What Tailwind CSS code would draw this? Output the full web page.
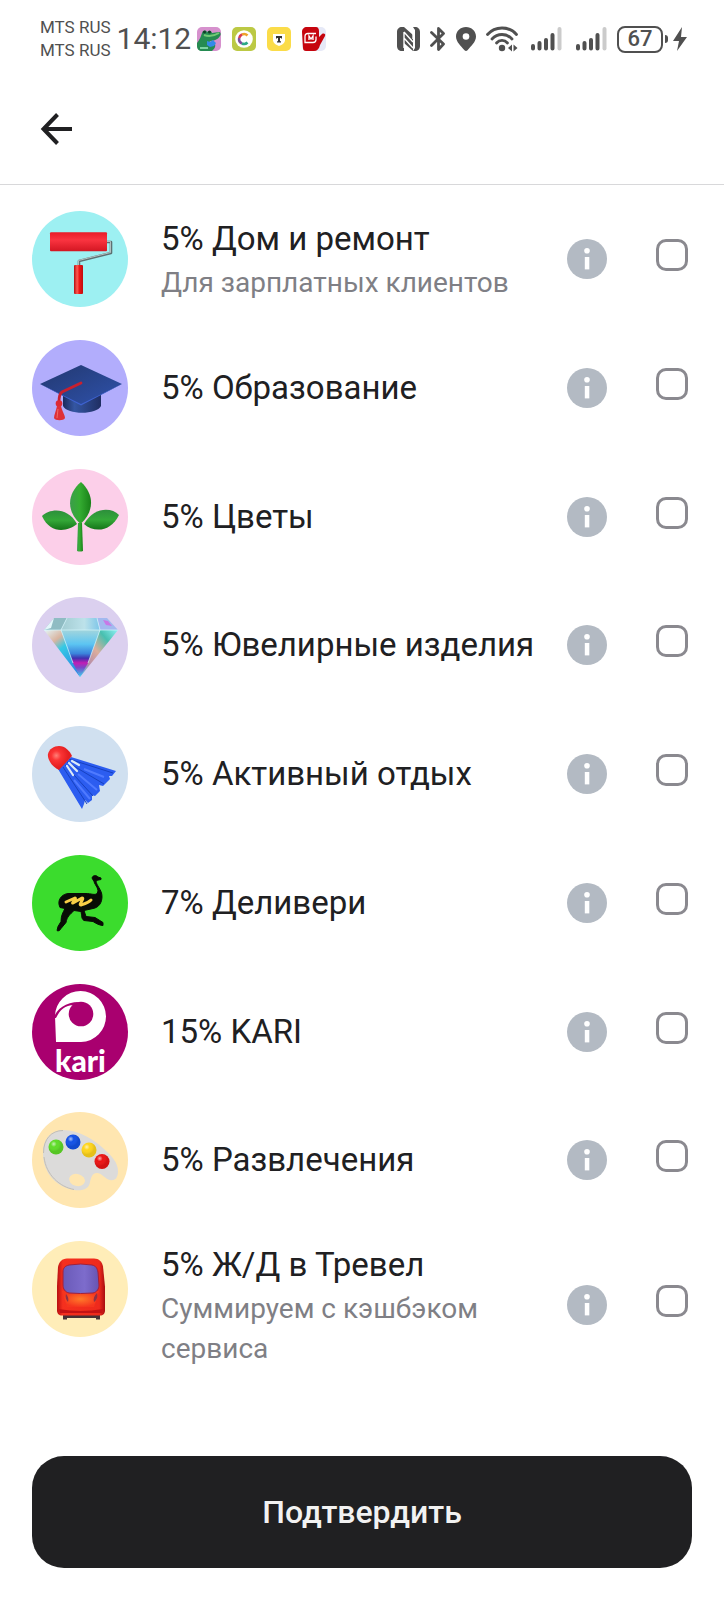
<!DOCTYPE html>
<html lang="ru">
<head>
  <meta charset="UTF-8" />
  <meta name="viewport" content="width=device-width, initial-scale=1" />
  <title>Категории кэшбэка</title>
  <script src="https://cdn.jsdelivr.net/npm/@tailwindcss/browser@4"></script>
</head>
<body class="bg-white font-['Roboto','Noto_Sans',sans-serif] text-[#202022]">

  <svg class="hidden" aria-hidden="true">
    <symbol id="info" viewBox="0 0 40 40">
      <circle cx="20" cy="20" r="20" fill="#b3bac3" />
      <circle cx="20" cy="11.7" r="2.8" fill="#fff" />
      <rect x="17.8" y="18" width="4.5" height="12.4" fill="#fff" />
    </symbol>
    <symbol id="signal" viewBox="0 0 32 26">
      <g stroke="#505050" stroke-width="4" stroke-linecap="round">
        <path d="M3 20V22.500M9.500 17V22.500M16 14V22.500M22.500 9V22.500" />
        <path d="M29.500 3V22.500" stroke="#cbcbcb" />
      </g>
    </symbol>
  </svg>

  <div class="min-h-screen flex flex-col">

    <!-- Статус-бар -->
    <div class="flex items-center justify-between h-[78px] pl-10 pr-9 text-[#505050]">
      <div class="flex items-center">
        <div class="text-[17px] leading-[23px] mr-1.5">
          <p>MTS RUS</p>
          <p>MTS RUS</p>
        </div>
        <span class="text-[30px] leading-8 mr-1.5">14:12</span>
        <div class="flex gap-[11px]">
          <svg class="size-6" viewBox="0 0 24 24">
            <rect width="24" height="24" rx="5" fill="#d691cd" />
            <path d="M0 16C3 12 4 9 5 6c1-3 4-3 5-1 2-2 5-1 5 1l7-1c2 0 2 3 1 4-2 4-7 5-11 5l6 3c1 3-1 5-3 7H5c-3 0-5-2-5-5z" fill="#258b51" />
            <path d="M7 8c5 2 10 1 15-2" stroke="#72ca75" stroke-width="2" fill="none" />
            <path d="M10 14l3 1 3-2 3 3-2 3-4 1-3-2z" fill="#3489e8" />
            <circle cx="7.500" cy="5" r="1.500" fill="#113c28" /><circle cx="12.500" cy="5" r="1.500" fill="#113c28" />
            <path d="M3 21h8" stroke="#7bd3a0" stroke-width="2" />
          </svg>
          <svg class="size-6" viewBox="0 0 24 24">
            <rect width="24" height="24" rx="5" fill="#bcc944" />
            <circle cx="12" cy="12" r="8.800" fill="#fff" />
            <g fill="none" stroke-width="2.600">
              <path d="M15.500 8.500A5 5 0 0 0 10 7.500" stroke="#eea22b" />
              <path d="M10 7.500A5 5 0 0 0 7.200 11" stroke="#d93a4e" />
              <path d="M7.200 11A5 5 0 0 0 10 16.500" stroke="#7b4c9d" />
              <path d="M10 16.500A5 5 0 0 0 15.500 15.500" stroke="#2ca986" />
            </g>
          </svg>
          <svg class="size-6" viewBox="0 0 24 24">
            <rect width="24" height="24" rx="5" fill="#fbdc49" />
            <path d="M6 7h12v6c0 3-3 5-6 6-3-1-6-3-6-6z" fill="#fff" />
            <path d="M9 9h6v2.500h-1V11h-1v3.300h1V15.500h-4v-1.200h1V11h-1v.5H9z" fill="#333" />
          </svg>
          <svg class="size-6" viewBox="0 0 24 24">
            <rect width="24" height="24" rx="5" fill="#e6e9f7" />
            <path d="M5 0h9c2 0 3 2 3 4v6l3-3c2-1 4 0 3 2l-5 9c-1 4-3 6-6 6H4c-2 0-3-1-3-3L0 5c0-3 2-5 5-5z" fill="#c6050e" />
            <path d="M14 6.500H6c-2 0-3 1-3 3v6h8c2 0 3-1 3-3v-3M7 13V9l2 3 2-3v4" stroke="#fff" stroke-width="1.300" fill="none" />
          </svg>
        </div>
      </div>

      <div class="flex items-center">
        <svg class="w-[23px] h-6 mr-2.5" viewBox="0 0 23 24">
          <path d="M5 0h2v24H5c-3 0-5-2-5-5V5c0-3 2-5 5-5zM16 0h2c3 0 5 2 5 5v14c0 3-2 5-5 5h-2l2-3V3z" fill="#505050" />
          <path d="M7 0l9 8v16l-9-8z" fill="#505050" />
          <path d="M7 5v16M7 5l9 10M7 11l9 10M16 2v10" stroke="#fff" stroke-width="1.400" fill="none" />
        </svg>
        <svg class="w-4 h-[26px] mr-2.5" viewBox="0 0 16 26">
          <path d="M1.500 6.500L13.500 18 8.500 23.500V2.500L13.500 7.500 1.500 19.500" fill="none" stroke="#505050" stroke-width="2.800" stroke-linejoin="round" stroke-linecap="round" />
        </svg>
        <svg class="w-5 h-[26px] mr-2.5" viewBox="0 0 20 26">
          <path d="M10 1C4.500 1 0 5 0 10.500 0 16 5 20 8.500 24.300c1 1 2 1 3 0C15 20 20 16 20 10.500 20 5 15.500 1 10 1z" fill="#505050" />
          <circle cx="10" cy="10.500" r="3.300" fill="#fff" />
        </svg>
        <svg class="w-8 h-[26px] mr-3" viewBox="0 0 32 26">
          <g fill="none" stroke="#505050" stroke-width="2.800" stroke-linecap="round">
            <path d="M1.500 8.500C9-.2 23-.2 30.500 8.500" />
            <path d="M6 13c5.500-6 14.500-6 20 0" />
            <path d="M10.500 17c3-3.400 8-3.400 11 0" />
          </g>
          <circle cx="16" cy="22" r="3.200" fill="#505050" />
          <path d="M26 18.500v7l-4-3.500zM27.500 18.500v7l4-3.500z" fill="#505050" />
        </svg>
        <svg class="w-8 h-[26px] mr-[13px]"><use href="#signal" /></svg>
        <svg class="w-8 h-[26px] mr-2.5"><use href="#signal" /></svg>
        <span class="flex items-center justify-center w-[46px] h-[27px] border-2 border-[#505050] rounded-lg text-[22px] leading-6 font-medium mr-0.5">67</span>
        <span class="w-[3px] h-2 rounded-r bg-[#505050] mr-1"></span>
        <svg class="w-4 h-[26px]" viewBox="0 0 16 26">
          <path d="M10 1L1 15h6L5 25 15 11H9z" fill="#505050" />
        </svg>
      </div>
    </div>

    <!-- Шапка -->
    <header class="flex items-center h-[107px] pb-1 px-10 border-b border-[#d8d8da]">
      <button type="button" aria-label="Назад">
        <svg class="size-8" viewBox="0 0 32 32" fill="none" stroke="#202022" stroke-width="4">
          <path d="M17.500 1.500L3.500 16l14 14.500M3 16h29" />
        </svg>
      </button>
    </header>

    <!-- Список категорий -->
    <main class="flex-1 flex flex-col px-8 pt-[26px] pb-8">
      <ul class="flex-1 flex flex-col justify-between pb-[55px]">

        <li class="flex items-center min-h-24">
          <svg class="size-24 shrink-0 self-start" viewBox="0 0 96 96">
            <defs>
              <linearGradient id="roll" x2="0" y2="1"><stop stop-color="#e81c28" /><stop offset=".4" stop-color="#fa3440" /><stop offset="1" stop-color="#d31622" /></linearGradient>
              <linearGradient id="handle"><stop stop-color="#b50d12" /><stop offset=".35" stop-color="#ff5a50" /><stop offset=".6" stop-color="#ed1515" /><stop offset="1" stop-color="#c00c10" /></linearGradient>
            </defs>
            <circle cx="48" cy="48" r="48" fill="#9df0f2" />
            <path d="M75 31h4v11L47 50v5" fill="none" stroke="#5d7072" stroke-width="2.600" stroke-linejoin="round" />
            <path d="M75 30.500h3.500v11L46.500 49.500v5" fill="none" stroke="#c6d6d6" stroke-width=".8" />
            <rect x="18" y="21.300" width="57" height="19" rx="1" fill="url(#roll)" />
            <rect x="42" y="54" width="9" height="29" rx="1" fill="url(#handle)" />
          </svg>
          <label for="home" class="flex-1 pt-0.5 pl-[33px]">
            <span class="block text-[33px] leading-[44px]">5% Дом и ремонт</span>
            <span class="block mt-0.5 text-[28px] leading-10 text-[#7f7f85]">Для зарплатных клиентов</span>
          </label>
          <button type="button" aria-label="Подробнее" class="shrink-0"><svg class="size-10"><use href="#info" /></svg></button>
          <input type="checkbox" id="home" class="appearance-none shrink-0 size-8 ml-[49px] mr-1 mb-2 border-3 border-[#8a898f] rounded-[10px] checked:bg-[#202022]" />
        </li>

        <li class="flex items-center min-h-24">
          <svg class="size-24 shrink-0 self-start" viewBox="0 0 96 96">
            <defs>
              <linearGradient id="board" x2="1" y2="1"><stop stop-color="#22386f" /><stop offset="1" stop-color="#2f52ac" /></linearGradient>
              <linearGradient id="capbase"><stop stop-color="#1a2a5c" /><stop offset=".3" stop-color="#3456a2" /><stop offset="1" stop-color="#1f2e62" /></linearGradient>
            </defs>
            <circle cx="48" cy="48" r="48" fill="#b2adfc" />
            <path d="M31 54v12c4 9 34 9 38 0V54z" fill="url(#capbase)" />
            <path d="M8 44L49 25l41 19-41 21z" fill="url(#board)" />
            <path d="M8 44l41 20 41-20-41 21.500z" fill="#3e62cf" />
            <path d="M49 43L30 52q-3 2-3 10" fill="none" stroke="#c8202f" stroke-width="2.800" stroke-linecap="round" />
            <circle cx="27" cy="63.500" r="3.300" fill="#dc2b35" />
            <path d="M25 66h4c1 5 4 9 4 12-1 3-10 3-11 0 0-3 2-7 3-12z" fill="#de3038" />
            <path d="M26 69l-1 9" stroke="#f26a63" stroke-width="1" />
          </svg>
          <label for="education" class="flex-1 pl-[33px] text-[33px] leading-[44px]">5% Образование</label>
          <button type="button" aria-label="Подробнее" class="shrink-0"><svg class="size-10"><use href="#info" /></svg></button>
          <input type="checkbox" id="education" class="appearance-none shrink-0 size-8 ml-[49px] mr-1 mb-2 border-3 border-[#8a898f] rounded-[10px] checked:bg-[#202022]" />
        </li>

        <li class="flex items-center min-h-24">
          <svg class="size-24 shrink-0 self-start" viewBox="0 0 96 96">
            <defs>
              <linearGradient id="leaf"><stop stop-color="#3c9d4b" /><stop offset=".45" stop-color="#35ad32" /><stop offset="1" stop-color="#188018" /></linearGradient>
              <linearGradient id="side" x2="0" y2="1"><stop stop-color="#2d8f3c" /><stop offset=".5" stop-color="#34a838" /><stop offset="1" stop-color="#147518" /></linearGradient>
            </defs>
            <circle cx="48" cy="48" r="48" fill="#fccfe9" />
            <path d="M46 54h4l1 28q-3 1-6 0z" fill="url(#leaf)" />
            <path d="M49 13C35 25 34 42 48.500 55 63 42 62 25 49 13z" fill="url(#leaf)" />
            <path d="M10 47c8-8 26-9 35 8-10 8-27 10-35-8z" fill="url(#side)" />
            <path d="M87 46c-8-8-25-8-35 9 10 9 27 8 35-9z" fill="url(#side)" />
          </svg>
          <label for="flowers" class="flex-1 pl-[33px] text-[33px] leading-[44px]">5% Цветы</label>
          <button type="button" aria-label="Подробнее" class="shrink-0"><svg class="size-10"><use href="#info" /></svg></button>
          <input type="checkbox" id="flowers" class="appearance-none shrink-0 size-8 ml-[49px] mr-1 mb-2 border-3 border-[#8a898f] rounded-[10px] checked:bg-[#202022]" />
        </li>

        <li class="flex items-center min-h-24">
          <svg class="size-24 shrink-0 self-start" viewBox="0 0 96 96">
            <defs>
              <linearGradient id="gem" x2="0" y2="1"><stop stop-color="#a2d5dd" /><stop offset=".3" stop-color="#5cc5f2" /><stop offset=".5" stop-color="#3b84dc" /><stop offset=".6" stop-color="#4030b0" /><stop offset=".7" stop-color="#c21db4" /><stop offset=".8" stop-color="#7a48c8" /><stop offset="1" stop-color="#35d5f0" /></linearGradient>
              <linearGradient id="gemleft" x2=".6" y2="1"><stop stop-color="#e3f6fa" /><stop offset=".3" stop-color="#d9b5a0" /><stop offset=".5" stop-color="#35c9e4" /><stop offset="1" stop-color="#2b8de4" /></linearGradient>
              <linearGradient id="gemright" x1="1" x2="0" y2="1"><stop stop-color="#8ff0f5" /><stop offset=".25" stop-color="#48c0b0" /><stop offset=".5" stop-color="#dcae9c" /><stop offset=".75" stop-color="#b58ba8" /><stop offset="1" stop-color="#35c5f5" /></linearGradient>
              <linearGradient id="gemtop"><stop stop-color="#a2ccd2" /><stop offset=".6" stop-color="#bde2ea" /><stop offset="1" stop-color="#7cc5e8" /></linearGradient>
            </defs>
            <circle cx="48" cy="48" r="48" fill="#dbd0ef" />
            <path d="M12 33h17l19 47z" fill="url(#gemleft)" />
            <path d="M68 33h18L48 80z" fill="url(#gemright)" />
            <path d="M29 33h39L56 66 48 80l-7-14z" fill="url(#gem)" />
            <path d="M22 21h13l-6 12H12z" fill="#8fbcc3" />
            <path d="M22 21l-10 12 7-2z" fill="#e4f7fa" />
            <path d="M35 21h30l3 12H29z" fill="url(#gemtop)" />
            <path d="M65 21h10l11 12H68z" fill="#a3b9ef" />
            <path d="M71 23l5 1 4 5-6-1z" fill="#c878e6" />
            <path d="M12 33h74M35 21l-6 12 12 33M65 21l3 12-12 33" stroke="#d6f8fc" stroke-width=".7" fill="none" />
          </svg>
          <label for="jewelry" class="flex-1 pl-[33px] text-[33px] leading-[44px]">5% Ювелирные изделия</label>
          <button type="button" aria-label="Подробнее" class="shrink-0"><svg class="size-10"><use href="#info" /></svg></button>
          <input type="checkbox" id="jewelry" class="appearance-none shrink-0 size-8 ml-[49px] mr-1 mb-2 border-3 border-[#8a898f] rounded-[10px] checked:bg-[#202022]" />
        </li>

        <li class="flex items-center min-h-24">
          <svg class="size-24 shrink-0 self-start" viewBox="0 0 96 96">
            <defs>
              <radialGradient id="cork" cx=".35" cy=".4"><stop stop-color="#ff8078" /><stop offset=".4" stop-color="#fb3434" /><stop offset="1" stop-color="#e41e20" /></radialGradient>
            </defs>
            <circle cx="48" cy="48" r="48" fill="#d0e0f0" />
            <path d="M39 31l45 14-4 5h-3l1 3-7 7-4-1 1 6-5 5-3-1v5l-4 3-3-3-1 4-2 5-24-40z" fill="#2c5df0" />
            <path d="M37 33l44 14M35 36l37 22M33 39l28 31M31 41l24 37" stroke="#1741bf" stroke-width="1" fill="none" />
            <path d="M52 43l20 8M46 48l19 16M42 54l16 19" stroke="#4f7aff" stroke-width="2" fill="none" />
            <path d="M40 35l7 4M37 37l8 8M35 40l6 9" stroke="#dce9f8" stroke-width="2.200" stroke-linecap="round" />
            <path d="M27 44c-7-3-12-11-11-16 1-5 6-8 11-8 6 0 11 5 13 10z" fill="url(#cork)" />
          </svg>
          <label for="sport" class="flex-1 pl-[33px] text-[33px] leading-[44px]">5% Активный отдых</label>
          <button type="button" aria-label="Подробнее" class="shrink-0"><svg class="size-10"><use href="#info" /></svg></button>
          <input type="checkbox" id="sport" class="appearance-none shrink-0 size-8 ml-[49px] mr-1 mb-2 border-3 border-[#8a898f] rounded-[10px] checked:bg-[#202022]" />
        </li>

        <li class="flex items-center min-h-24">
          <svg class="size-24 shrink-0 self-start" viewBox="0 0 96 96">
            <circle cx="48" cy="48" r="48" fill="#3bdc2d" />
            <path d="M60 23c1-3 4-3 6-1l3 1v1.500l-5 1c0 5 6 9 6 16 0 6-3 11-9 12l-9 2 2 6 9 1 8 5v3c-3 0-7-2-10-4l-9-1c-3-2-2-5-3-9l-7-1c-4 4-7 6-8 12l-5 6c-1 2-3 3-4 2l1-4 3-5c0-6 2-9 4-13l-5-1-1-3c-1-6 4-11 10-11h17c5 0 9 2 11 0 3-4-2-8-3-12z" fill="#080c05" stroke="#080c05" stroke-width="1" stroke-linejoin="round" />
            <path d="M34 47l9-4c2 0-4 6-2 5l9-5c3 0-4 7-1 7 3-1 7-2 10-5" fill="none" stroke="#f8cf46" stroke-width="3" stroke-linecap="round" stroke-linejoin="round" />
          </svg>
          <label for="delivery" class="flex-1 pl-[33px] text-[33px] leading-[44px]">7% Деливери</label>
          <button type="button" aria-label="Подробнее" class="shrink-0"><svg class="size-10"><use href="#info" /></svg></button>
          <input type="checkbox" id="delivery" class="appearance-none shrink-0 size-8 ml-[49px] mr-1 mb-2 border-3 border-[#8a898f] rounded-[10px] checked:bg-[#202022]" />
        </li>

        <li class="flex items-center min-h-24">
          <svg class="size-24 shrink-0 self-start" viewBox="0 0 96 96">
            <circle cx="48" cy="48" r="48" fill="#a9006f" />
            <path d="M23 32a25.500 25.500 0 1 1 26 26H24z" fill="#fff" />
            <circle cx="49" cy="30" r="12.300" fill="#a9006f" />
            <path d="M22 34c2-9 12-16 25-16l-5 3c-9 0-14 5-18 13z" fill="#a9006f" />
            <text x="48.500" y="88" text-anchor="middle" fill="#fff" class="font-['Lato',sans-serif] font-black text-[30px]">kari</text>
          </svg>
          <label for="kari" class="flex-1 pl-[33px] text-[33px] leading-[44px]">15% KARI</label>
          <button type="button" aria-label="Подробнее" class="shrink-0"><svg class="size-10"><use href="#info" /></svg></button>
          <input type="checkbox" id="kari" class="appearance-none shrink-0 size-8 ml-[49px] mr-1 mb-2 border-3 border-[#8a898f] rounded-[10px] checked:bg-[#202022]" />
        </li>

        <li class="flex items-center min-h-24">
          <svg class="size-24 shrink-0 self-start" viewBox="0 0 96 96">
            <defs>
              <radialGradient id="shine" cx=".35" cy=".3"><stop stop-color="#fff" stop-opacity=".65" /><stop offset=".4" stop-color="#fff" stop-opacity="0" /><stop offset="1" stop-color="#000" stop-opacity=".1" /></radialGradient>
            </defs>
            <circle cx="48" cy="48" r="48" fill="#ffe6b0" />
            <path d="M11 41c0-14 8-23 20-23 17 0 31 10 41 19 8 7 14 14 14 22 0 7-3 10-8 9-5-1-8-7-13-7s-6 5-7 9c-1 7-7 9-16 8C25 75 11 62 11 41z" fill="#dcdbda" />
            <ellipse cx="45" cy="68" rx="8" ry="6" transform="rotate(15 45 68)" fill="#ffe6b0" />
            <path d="M11.500 41c0-14 8-22.500 19.500-22.500M12 45c2 18 16 30 30 32.500" fill="none" stroke="#c3beb4" stroke-width="1" />
            <circle cx="24" cy="35" r="7.500" fill="#5fdc28" /><circle cx="24" cy="35" r="7.500" fill="url(#shine)" />
            <circle cx="41" cy="30" r="7.500" fill="#1452e6" /><circle cx="41" cy="30" r="7.500" fill="url(#shine)" />
            <circle cx="57" cy="38" r="7.500" fill="#ffd51c" /><circle cx="57" cy="38" r="7.500" fill="url(#shine)" />
            <circle cx="70" cy="49.500" r="7.500" fill="#eb1414" /><circle cx="70" cy="49.500" r="7.500" fill="url(#shine)" />
          </svg>
          <label for="fun" class="flex-1 pl-[33px] text-[33px] leading-[44px]">5% Развлечения</label>
          <button type="button" aria-label="Подробнее" class="shrink-0"><svg class="size-10"><use href="#info" /></svg></button>
          <input type="checkbox" id="fun" class="appearance-none shrink-0 size-8 ml-[49px] mr-1 mb-2 border-3 border-[#8a898f] rounded-[10px] checked:bg-[#202022]" />
        </li>

        <li class="flex items-center min-h-32">
          <svg class="size-24 shrink-0 self-start" viewBox="0 0 96 96">
            <defs>
              <linearGradient id="body"><stop stop-color="#b80f12" /><stop offset=".12" stop-color="#f5301e" /><stop offset=".88" stop-color="#ee2a1c" /><stop offset="1" stop-color="#a80d10" /></linearGradient>
              <radialGradient id="nose"><stop stop-color="#ff7a2a" /><stop offset="1" stop-color="#f5351e" /></radialGradient>
              <linearGradient id="glass"><stop stop-color="#6a5ab8" /><stop offset=".6" stop-color="#7d6ccc" /><stop offset="1" stop-color="#6754b2" /></linearGradient>
            </defs>
            <circle cx="48" cy="48" r="48" fill="#ffedb8" />
            <path d="M31 72h37v6.500h-4V77H35v1.500h-4z" fill="#463236" />
            <path d="M35 17.500h27c5 0 8 3 9 8l2 20v24c0 3-2 5-5 5H30c-3 0-5-2-5-5V45l1-19c1-5 4-8.500 9-8.500z" fill="url(#body)" />
            <path d="M30 50l5 16h27l5-16z" fill="url(#nose)" />
            <path d="M27 68q21 4 44 0l-1 4H28z" fill="#c41214" />
            <path d="M37 24q12-2 23 0c4 1 5 3 6 7l1 13c0 4-2 7-6 8q-13 1-24 0c-4-1-6-4-6-8V31c0-4 2-6 6-7z" fill="url(#glass)" stroke="#a32038" stroke-width="1" />
            <path d="M34 53c2 2 3 5 2 8-2-2-3-5-2-8zM65 52c-3 3-4 6-3 9 3-2 4-6 3-9z" fill="#8f3145" />
          </svg>
          <label for="train" class="flex-1 pt-0.5 pl-[33px]">
            <span class="block text-[33px] leading-[44px]">5% Ж/Д в Тревел</span>
            <span class="block mt-0.5 text-[28px] leading-10 text-[#7f7f85]">Суммируем с кэшбэком сервиса</span>
          </label>
          <button type="button" aria-label="Подробнее" class="shrink-0"><svg class="size-10"><use href="#info" /></svg></button>
          <input type="checkbox" id="train" class="appearance-none shrink-0 size-8 ml-[49px] mr-1 mb-2 border-3 border-[#8a898f] rounded-[10px] checked:bg-[#202022]" />
        </li>

      </ul>

      <button type="submit" class="mt-8 w-full h-28 shrink-0 rounded-4xl bg-[#202022] text-[#f2f2f2] text-[32px] font-medium">Подтвердить</button>
    </main>

  </div>

</body>
</html>
